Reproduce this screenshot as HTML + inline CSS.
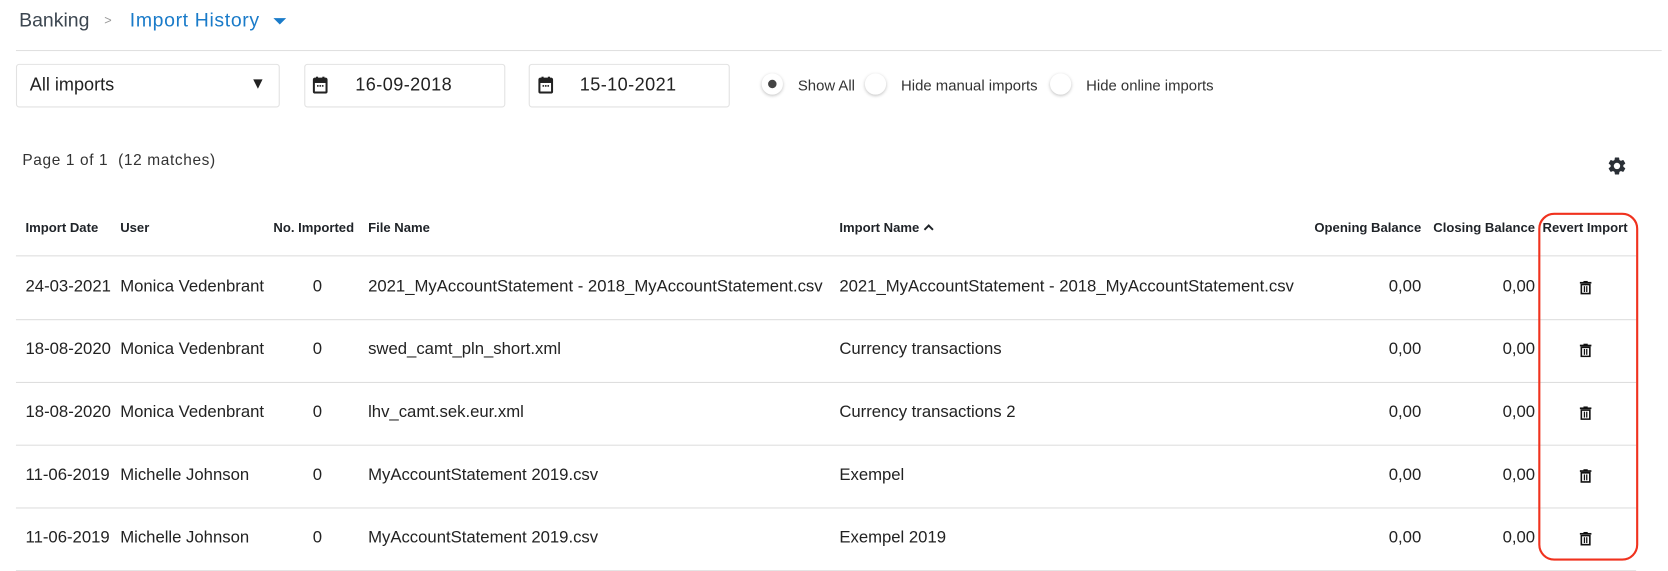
<!DOCTYPE html>
<html><head><style>
body{margin:0;width:1668px;height:570px;background:#fff;font-family:"Liberation Sans",sans-serif;color:#222;position:relative;overflow:hidden}
#w{position:absolute;left:0;top:0;width:1568px;height:536px;transform:scale(1.0638);transform-origin:0 0}
.a{position:absolute;white-space:nowrap}
.box{position:absolute;border:1px solid #e2e2e2;border-radius:3px;top:60px;height:39px}
.h{font-size:12.3px;font-weight:bold;top:207px;color:#1f2328}
.t{font-size:15.7px;color:#222}
.line{position:absolute;left:15px;width:1523px;height:1px;background:#dedede}
.r{text-align:right}
.radio{position:absolute;top:69px;width:20px;height:20px;border-radius:50%;background:#fff;box-shadow:0 1px 3px rgba(0,0,0,.25)}
</style></head><body><div id="w">
<div class="a" style="left:18px;top:8px;font-size:18.3px;color:#3c4650">Banking</div>
<div class="a" style="left:98px;top:12px;font-size:12px;color:#999">&gt;</div>
<div class="a" style="left:122px;top:8px;font-size:18.3px;color:#1a7bc9;letter-spacing:.6px">Import History</div>
<div class="a" style="left:257px;top:17px;width:0;height:0;border-left:6px solid transparent;border-right:6px solid transparent;border-top:6px solid #1a7bc9"></div>
<div style="position:absolute;left:15px;top:47px;width:1547px;height:1px;background:#e0e0e0"></div>

<div class="box" style="left:15px;width:246px"></div>
<div class="a" style="left:28px;top:70px;font-size:17px">All imports</div>
<div class="a" style="left:235px;top:70px;font-size:15px">▼</div>
<div class="box" style="left:286px;width:187px"></div>
<div class="box" style="left:497px;width:187px"></div>
<svg class="a" style="left:294px;top:72px" width="14" height="16" viewBox="0 0 14 16"><rect x="1" y="2" width="12" height="13" rx="1" fill="none" stroke="#222" stroke-width="2"/><rect x="1" y="2" width="12" height="4" fill="#222"/><rect x="3" y="0" width="2" height="3" fill="#222"/><rect x="9" y="0" width="2" height="3" fill="#222"/><rect x="4" y="8" width="1.5" height="1.5" fill="#222"/><rect x="6.3" y="8" width="1.5" height="1.5" fill="#222"/><rect x="8.6" y="8" width="1.5" height="1.5" fill="#222"/></svg>
<svg class="a" style="left:506px;top:72px" width="14" height="16" viewBox="0 0 14 16"><rect x="1" y="2" width="12" height="13" rx="1" fill="none" stroke="#222" stroke-width="2"/><rect x="1" y="2" width="12" height="4" fill="#222"/><rect x="3" y="0" width="2" height="3" fill="#222"/><rect x="9" y="0" width="2" height="3" fill="#222"/><rect x="4" y="8" width="1.5" height="1.5" fill="#222"/><rect x="6.3" y="8" width="1.5" height="1.5" fill="#222"/><rect x="8.6" y="8" width="1.5" height="1.5" fill="#222"/></svg>
<div class="a" style="left:334px;top:70px;font-size:17px;letter-spacing:.4px">16-09-2018</div>
<div class="a" style="left:545px;top:70px;font-size:17px;letter-spacing:.4px">15-10-2021</div>

<div class="radio" style="left:716px"><div style="position:absolute;left:6px;top:6px;width:8px;height:8px;border-radius:50%;background:#444"></div></div>
<div class="a" style="left:750px;top:72px;font-size:14px;color:#333">Show All</div>
<div class="radio" style="left:813px"></div>
<div class="a" style="left:847px;top:72px;font-size:14px;color:#333">Hide manual imports</div>
<div class="radio" style="left:987px"></div>
<div class="a" style="left:1021px;top:72px;font-size:14px;color:#333">Hide online imports</div>

<div class="a" style="left:21px;top:143px;font-size:14.5px;color:#333;letter-spacing:.6px">Page 1 of 1&nbsp; (12 matches)</div>
<svg class="a" style="left:1510px;top:146px" width="20" height="20" viewBox="0 0 24 24"><path fill="#2a2f36" d="M19.14 12.94c.04-.3.06-.61.06-.94s-.02-.64-.07-.94l2.030-1.58a.49.49 0 0 0 .12-.61l-1.92-3.32a.49.49 0 0 0-.59-.22l-2.39.96c-.5-.38-1.03-.7-1.62-.94l-.36-2.540a.48.48 0 0 0-.48-.41h-3.84c-.24 0-.43.17-.47.41l-.36 2.54c-.59.24-1.13.57-1.62.94l-2.39-.96a.49.49 0 0 0-.59.22L2.74 8.87c-.12.21-.08.47.12.61l2.03 1.58c-.05.3-.09.63-.09.94s.02.64.07.94l-2.03 1.58a.49.49 0 0 0-.12.61l1.92 3.32c.12.22.37.29.59.22l2.39-.96c.5.38 1.03.7 1.62.94l.36 2.54c.05.24.24.41.48.41h3.84c.24 0 .44-.17.47-.41l.36-2.54c.59-.24 1.130-.56 1.62-.94l2.39.96c.22.08.47 0 .59-.22l1.92-3.32c.12-.22.07-.47-.12-.61l-2.01-1.58zM12 15.6A3.6 3.6 0 1 1 12 8.4a3.6 3.6 0 0 1 0 7.2z"/></svg>

<div class="a h" style="left:24px">Import Date</div>
<div class="a h" style="left:113px">User</div>
<div class="a h" style="left:257px">No. Imported</div>
<div class="a h" style="left:346px">File Name</div>
<div class="a h" style="left:789px">Import Name <svg width="10" height="8" viewBox="0 0 10 8" style="vertical-align:0"><path d="M1 6 L5 2 L9 6" stroke="#1f2328" stroke-width="1.8" fill="none"/></svg></div>
<div class="a h r" style="left:1200px;width:136px">Opening Balance</div>
<div class="a h r" style="left:1310px;width:133px">Closing Balance</div>
<div class="a h" style="left:1450px">Revert Import</div>
<div class="line" style="top:240px"></div>

<div id="rows"></div>
<script>
var d=[["24-03-2021","Monica Vedenbrant","2021_MyAccountStatement - 2018_MyAccountStatement.csv","2021_MyAccountStatement - 2018_MyAccountStatement.csv"],
["18-08-2020","Monica Vedenbrant","swed_camt_pln_short.xml","Currency transactions"],
["18-08-2020","Monica Vedenbrant","lhv_camt.sek.eur.xml","Currency transactions 2"],
["11-06-2019","Michelle Johnson","MyAccountStatement 2019.csv","Exempel"],
["11-06-2019","Michelle Johnson","MyAccountStatement 2019.csv","Exempel 2019"]];
var h="";
d.forEach(function(r,i){var y=261+i*59;
h+='<div class="a t" style="left:24px;top:'+y+'px">'+r[0]+'</div>'+
'<div class="a t" style="left:113px;top:'+y+'px">'+r[1]+'</div>'+
'<div class="a t" style="left:294px;top:'+y+'px">0</div>'+
'<div class="a t" style="left:346px;top:'+y+'px">'+r[2]+'</div>'+
'<div class="a t" style="left:789px;top:'+y+'px">'+r[3]+'</div>'+
'<div class="a t r" style="left:1236px;width:100px;top:'+y+'px">0,00</div>'+
'<div class="a t r" style="left:1343px;width:100px;top:'+y+'px">0,00</div>'+
'<svg class="a" style="left:1485px;top:'+(y+3)+'px" width="11" height="13" viewBox="0 0 11 13"><rect x="0" y="1" width="11" height="1.6" fill="#111"/><rect x="3.5" y="0" width="4" height="1.5" fill="#111"/><path d="M1.5 3.5h8v8.5h-8z" fill="none" stroke="#111" stroke-width="1.5"/><rect x="3.8" y="5" width="1.2" height="5.5" fill="#111"/><rect x="6" y="5" width="1.2" height="5.5" fill="#111"/></svg>'+
'<div class="line" style="top:'+(y+39)+'px"></div>';});
document.getElementById("rows").innerHTML=h;
</script>
<div style="position:absolute;left:1446px;top:200px;width:90px;height:323px;border:2px solid #f0321e;border-radius:15px"></div>
</div></body></html>
